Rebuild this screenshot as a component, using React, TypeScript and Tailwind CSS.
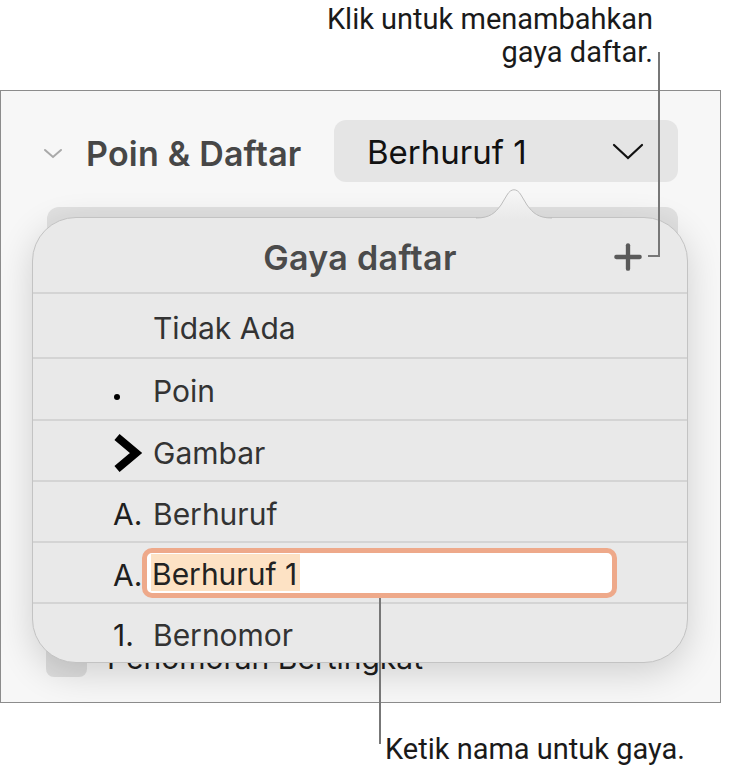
import { Plus } from 'lucide-react'

type Row = { prefix: 'none' | 'dot' | 'chev' | 'A' | '1'; label: string; h: string; editing?: boolean }

const rows: Row[] = [
  { prefix: 'none', label: 'Tidak Ada', h: 'h-[65px]' },
  { prefix: 'dot', label: 'Poin', h: 'h-[62px]' },
  { prefix: 'chev', label: 'Gambar', h: 'h-[61px]' },
  { prefix: 'A', label: 'Berhuruf', h: 'h-[61px]' },
  { prefix: 'A', label: 'Berhuruf 1', h: 'h-[61px]', editing: true },
  { prefix: '1', label: 'Bernomor', h: 'flex-1' },
]

function Prefix({ kind }: { kind: Row['prefix'] }) {
  if (kind === 'dot') {
    return (
      <div className="flex w-[40px] items-end pb-[2px]">
        <span className="ml-[1px] mt-[12px] h-[6px] w-[6px] rounded-full bg-black" />
      </div>
    )
  }
  if (kind === 'chev') {
    return (
      <div className="w-[40px]">
        <svg width="30" height="40" viewBox="0 0 30 40">
          <path d="M4 4 L23 20 L4 36" fill="none" stroke="#000" strokeWidth="8" strokeLinejoin="miter" />
        </svg>
      </div>
    )
  }
  if (kind === 'A') return <span className="w-[40px] text-[#1e1e1e]">A.</span>
  if (kind === '1') return <span className="w-[40px] text-[#1e1e1e]">1.</span>
  return <span className="w-[40px]" />
}

function ListStylePopover() {
  return (
    <div className="absolute left-[32px] top-[217px] flex h-[446px] w-[656px] flex-col rounded-[44px] border border-[#c3c3c3] bg-[#e9e9e9] shadow-[0_10px_36px_rgba(0,0,0,0.16)]">
      {/* header */}
      <div className="relative flex h-[74px] items-center justify-center pt-[4px]">
        <span className="text-[34px] font-semibold tracking-[0.3px] text-[#4b4b4b]">Gaya daftar</span>
        <Plus className="absolute left-[575px] top-[19px] h-[40px] w-[40px] text-[#5a5a5a]" strokeWidth={2.6} />
      </div>
      {rows.map((r) => (
        <div
          key={r.label + r.prefix}
          className={`relative flex items-center border-t-2 border-[#d4d4d4] pl-[80px] pt-[5px] text-[30px] text-[#333333] ${r.h}`}
        >
          <Prefix kind={r.prefix} />
          {r.editing ? (
            <div className="ml-[-11px] mt-[-5px] flex h-[50px] w-[475px] items-center rounded-[10px] border-[5px] border-[#eea98a] bg-white pl-[4px]">
              <span className="bg-[#fde2c4] pl-[1px] pr-[3px] pt-[3px] leading-[34px] text-[#222222]">Berhuruf 1</span>
            </div>
          ) : (
            <span>{r.label}</span>
          )}
        </div>
      ))}
    </div>
  )
}

export default function App() {
  return (
    <div className="relative h-[771px] w-[729px] overflow-hidden bg-white font-[Inter,sans-serif]">
      {/* top callout */}
      <div className="h-[90px] pr-[76px] pt-[3px] text-right font-[Roboto,sans-serif] text-[29px] leading-[33px] text-[#1a1a1a]">
        Klik untuk menambahkan
        <br />
        gaya daftar.
      </div>

      {/* inspector panel */}
      <div className="h-[613px] w-[721px] border border-[#8c8c8c] bg-[#f7f7f7]">
        <div className="mt-[29px] flex h-[62px] items-center pr-[42px]">
          <svg className="ml-[42px] mt-[4px]" width="20" height="11" viewBox="0 0 20 11">
            <path d="M2 2 L10 9 L18 2" fill="none" stroke="#a9a9a9" strokeWidth="2" strokeLinecap="round" />
          </svg>
          <span className="ml-[23px] pt-[4px] text-[34px] font-semibold tracking-[0.2px] text-[#474747]">Poin &amp; Daftar</span>
          <div className="ml-auto flex h-[62px] w-[344px] items-center justify-between rounded-[12px] bg-[#e5e5e5] pl-[33px] pr-[34px]">
            <span className="pt-[4px] text-[33px] text-[#111111]">Berhuruf 1</span>
            <svg width="32" height="17" viewBox="0 0 32 17">
              <path d="M2 2 L16 15 L30 2" fill="none" stroke="#111" strokeWidth="2.2" strokeLinecap="round" />
            </svg>
          </div>
        </div>
        <div className="ml-[46px] mr-[42px] mt-[25px] h-[400px] rounded-[12px] bg-[#e1e1e1]" />
        <div className="ml-[45px] mt-[32px] flex h-[38px] items-center gap-[20px]">
          <div className="h-[38px] w-[41px] rounded-[8px] bg-[#dedede]" />
          <span className="text-[30px] text-[#1e1e1e]">Penomoran Bertingkat</span>
        </div>
      </div>

      {/* bottom callout */}
      <div className="pl-[385px] pt-[30px] font-[Roboto,sans-serif] text-[29px] leading-[33px] text-[#1a1a1a]">
        Ketik nama untuk gaya.
      </div>

      <ListStylePopover />

      {/* popover arrow */}
      <svg className="absolute left-[476px] top-[188px]" width="76" height="31" viewBox="0 0 76 31">
        <defs>
          <linearGradient id="arrowFill" x1="0" y1="0" x2="0" y2="1">
            <stop offset="0" stopColor="#f7f7f7" />
            <stop offset="1" stopColor="#e9e9e9" />
          </linearGradient>
        </defs>
        <path d="M0 30 C14 30 19 25 25 17 L31 7 C35 0 41 0 45 7 L51 17 C57 25 62 30 76 30 L76 31 L0 31 Z" fill="url(#arrowFill)" />
        <path d="M0 30 C14 30 19 25 25 17 L31 7 C35 0 41 0 45 7 L51 17 C57 25 62 30 76 30" fill="none" stroke="#bdbdbd" strokeWidth="1" />
      </svg>

      {/* leader lines */}
      <div className="absolute left-[658px] top-[52px] h-[205px] w-[2px] bg-[#777777]" />
      <div className="absolute left-[648px] top-[255px] h-[2px] w-[12px] bg-[#777777]" />
      <div className="absolute left-[379px] top-[598px] h-[146px] w-[2px] bg-[#777777]" />
    </div>
  )
}
